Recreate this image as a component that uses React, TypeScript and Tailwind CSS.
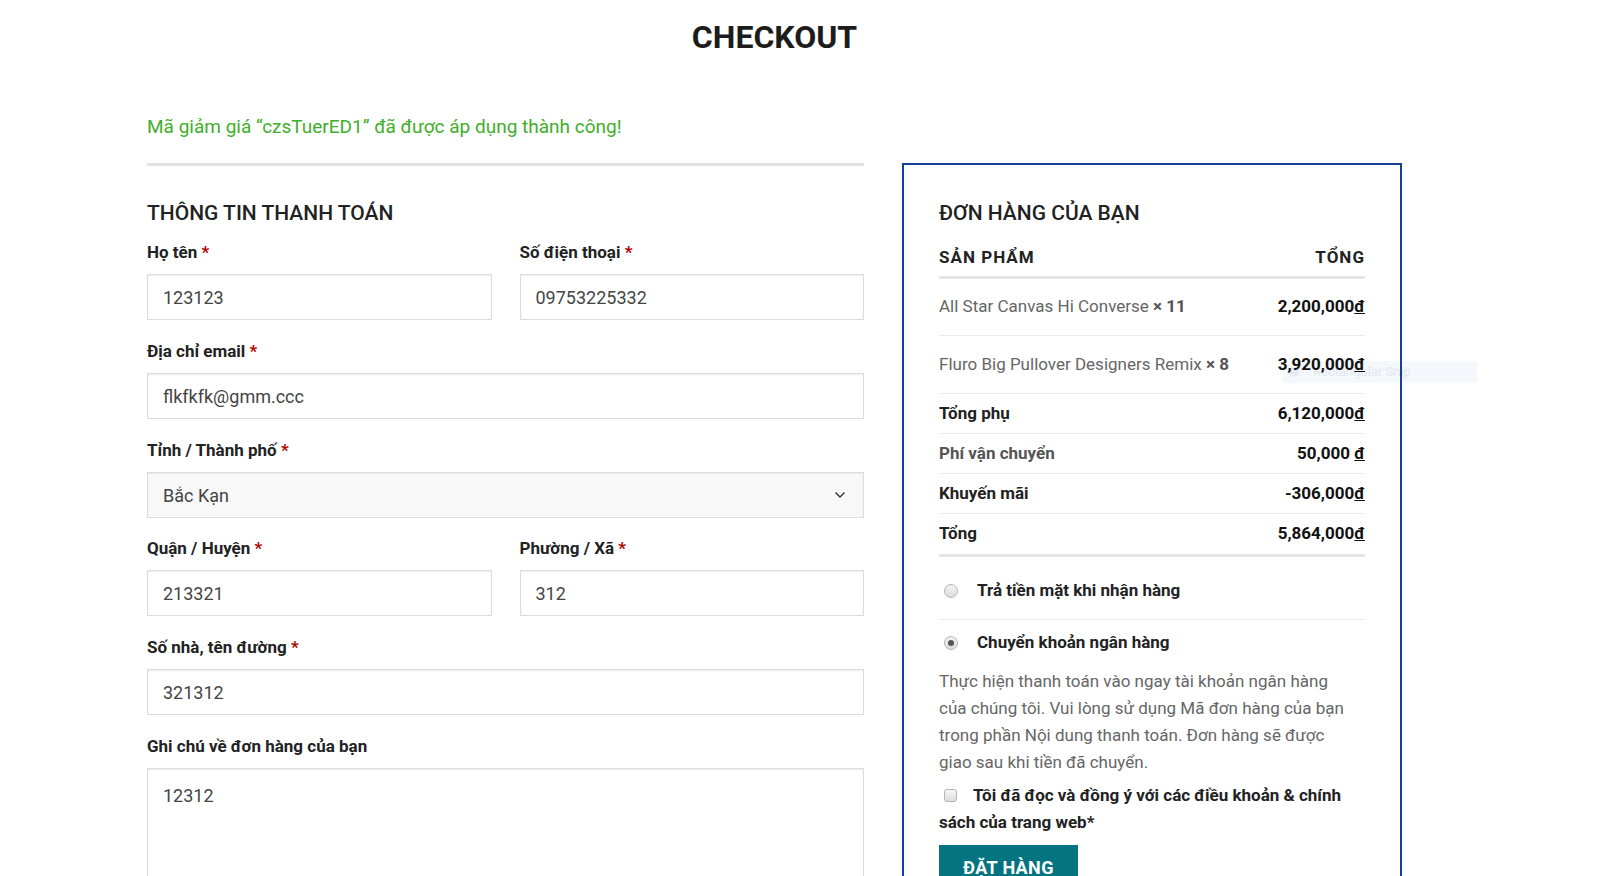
import React from "react";

const Label = ({ text, req = true }: { text: string; req?: boolean }) => (
  <div className="h-[22px] leading-[20px] text-[17px] font-bold text-[#222] mb-[10px]">
    {text}
    {req && <span className="text-[#b20000]"> *</span>}
  </div>
);

const Input = ({ value }: { value: string }) => (
  <div className="h-[46px] border border-[#dcdcdc] shadow-[inset_0_1px_2px_rgba(0,0,0,0.08)] bg-white px-[15px] flex items-center text-[18px] text-[#444] mb-[21px]">
    {value}
  </div>
);

const Radio = ({ checked }: { checked?: boolean }) => (
  <span className="inline-flex w-[14px] h-[14px] rounded-full border border-[#b5b5b5] bg-gradient-to-b from-[#f4f4f4] to-[#dcdcdc] items-center justify-center shrink-0">
    {checked && <span className="w-[6px] h-[6px] rounded-full bg-[#555]" />}
  </span>
);

const Dong = () => <span className="underline">đ</span>;

export default function App() {
  return (
    <div className="relative w-full min-h-[876px] bg-white overflow-hidden font-['Roboto','Liberation_Sans',sans-serif]">
      {/* faint screen-capture ghost overlay (sits behind the content) */}
      <div className="absolute z-0 left-[1283px] top-[361px] w-[194px] h-[22px] bg-[#f4f7fc] flex items-center pl-[6px] gap-[14px] text-[13px] text-[#e3e8f0]">
        <span className="w-[10px] h-[10px] rounded-full bg-[#e6ecf6]" />
        <span>Rectangular Snip</span>
      </div>
      <div className="relative z-10 ml-[147px] w-[1260px]">
        <h1 className="pt-[18px] pr-[5px] h-[56px] text-center text-[32px] leading-[38px] font-bold text-[#1c1c1c]">
          CHECKOUT
        </h1>
        <div className="mt-[59px] h-[24px] leading-[24px] text-[19px] text-[#3fae2a]">
          Mã giảm giá “czsTuerED1” đã được áp dụng thành công!
        </div>
        <div className="mt-[24px] flex">
          {/* Left column */}
          <div className="w-[717px]">
            <div className="h-[3px] bg-[#e2e2e2]" />
            <h2 className="mt-[33px] h-[28px] leading-[28px] text-[21px] font-medium text-[#222] mb-[15px]">
              THÔNG TIN THANH TOÁN
            </h2>
            <div className="grid grid-cols-2 gap-x-[28px]">
              <div>
                <Label text="Họ tên" />
                <Input value="123123" />
              </div>
              <div>
                <Label text="Số điện thoại" />
                <Input value="09753225332" />
              </div>
            </div>
            <Label text="Địa chỉ email" />
            <Input value="flkfkfk@gmm.ccc" />
            <Label text="Tỉnh / Thành phố" />
            <div className="h-[46px] border border-[#dcdcdc] shadow-[inset_0_1px_2px_rgba(0,0,0,0.06)] bg-[#f8f8f8] px-[15px] flex items-center justify-between text-[18px] text-[#444] mb-[20px]">
              <span>Bắc Kạn</span>
              <svg width="12" height="8" viewBox="0 0 12 8" className="mr-[2px]">
                <path d="M1.5 1.5 L6 6 L10.5 1.5" fill="none" stroke="#333" strokeWidth="1.4" />
              </svg>
            </div>
            <div className="grid grid-cols-2 gap-x-[28px]">
              <div>
                <Label text="Quận / Huyện" />
                <Input value="213321" />
              </div>
              <div>
                <Label text="Phường / Xã" />
                <Input value="312" />
              </div>
            </div>
            <Label text="Số nhà, tên đường" />
            <Input value="321312" />
            <Label text="Ghi chú về đơn hàng của bạn" req={false} />
            <div className="h-[140px] border border-[#dcdcdc] shadow-[inset_0_1px_2px_rgba(0,0,0,0.08)] bg-white px-[15px] pt-[15px] text-[18px] leading-[24px] text-[#444]">
              12312
            </div>
          </div>

          {/* Right card */}
          <div className="ml-[38px] w-[500px] border-2 border-[#16419a] pl-[35px] pr-[35px] pt-[34px] pb-[40px]">
            <h2 className="h-[28px] leading-[28px] text-[21px] font-medium text-[#222]">
              ĐƠN HÀNG CỦA BẠN
            </h2>
            <div className="mt-[19px] flex justify-between h-[22px] leading-[22px] text-[17px] font-bold text-[#222] tracking-[0.06em]">
              <span>SẢN PHẨM</span>
              <span>TỔNG</span>
            </div>
            <div className="mt-[8px] h-[3px] bg-[#e4e4e4]" />
            <div className="flex justify-between items-center h-[57px] border-b border-[#ececec] text-[17px]">
              <span className="text-[#666]">
                All Star Canvas Hi Converse <span className="font-bold text-[#555]">× 11</span>
              </span>
              <span className="font-bold text-[#111]">
                2,200,000<Dong />
              </span>
            </div>
            <div className="flex justify-between items-center h-[58px] border-b border-[#ececec] text-[17px]">
              <span className="text-[#666]">
                Fluro Big Pullover Designers Remix <span className="font-bold text-[#555]">× 8</span>
              </span>
              <span className="font-bold text-[#111]">
                3,920,000<Dong />
              </span>
            </div>
            <div className="flex justify-between items-center h-[40px] border-b border-[#ececec] text-[17px]">
              <span className="font-bold text-[#222]">Tổng phụ</span>
              <span className="font-bold text-[#111]">
                6,120,000<Dong />
              </span>
            </div>
            <div className="flex justify-between items-center h-[40px] border-b border-[#ececec] text-[17px]">
              <span className="font-bold text-[#555]">Phí vận chuyển</span>
              <span className="font-bold text-[#111]">
                50,000 <Dong />
              </span>
            </div>
            <div className="flex justify-between items-center h-[40px] border-b border-[#ececec] text-[17px]">
              <span className="font-bold text-[#222]">Khuyến mãi</span>
              <span className="font-bold text-[#111]">
                -306,000<Dong />
              </span>
            </div>
            <div className="flex justify-between items-center h-[40px] text-[17px]">
              <span className="font-bold text-[#222]">Tổng</span>
              <span className="font-bold text-[#111]">
                5,864,000<Dong />
              </span>
            </div>
            <div className="h-[3px] bg-[#e4e4e4]" />
            <div className="flex items-center h-[63px] pt-[6px] border-b border-[#ececec] pl-[5px] gap-[19px] text-[17px] font-bold text-[#222]">
              <Radio />
              <span>Trả tiền mặt khi nhận hàng</span>
            </div>
            <div className="flex items-center h-[46px] pl-[5px] gap-[19px] text-[17px] font-bold text-[#222]">
              <Radio checked />
              <span>Chuyển khoản ngân hàng</span>
            </div>
            <p className="mt-[2px] text-[17px] leading-[27px] text-[#666]">
              Thực hiện thanh toán vào ngay tài khoản ngân hàng
              <br />
              của chúng tôi. Vui lòng sử dụng Mã đơn hàng của bạn
              <br />
              trong phần Nội dung thanh toán. Đơn hàng sẽ được
              <br />
              giao sau khi tiền đã chuyển.
            </p>
            <p className="mt-[6px] text-[17px] leading-[27px] font-bold text-[#222]">
              <span className="inline-block w-[13px] h-[13px] rounded-[3px] border border-[#b5b5b5] bg-gradient-to-b from-[#f6f6f6] to-[#dedede] ml-[5px] mr-[16px] align-[-1px]" />
              Tôi đã đọc và đồng ý với các điều khoản &amp; chính
              <br />
              sách của trang web*
            </p>
            <button className="mt-[9px] h-[44px] px-[24px] bg-[#037480] text-white text-[18px] font-bold tracking-[0.02em]">
              ĐẶT HÀNG
            </button>
          </div>
        </div>
      </div>
    </div>
  );
}
